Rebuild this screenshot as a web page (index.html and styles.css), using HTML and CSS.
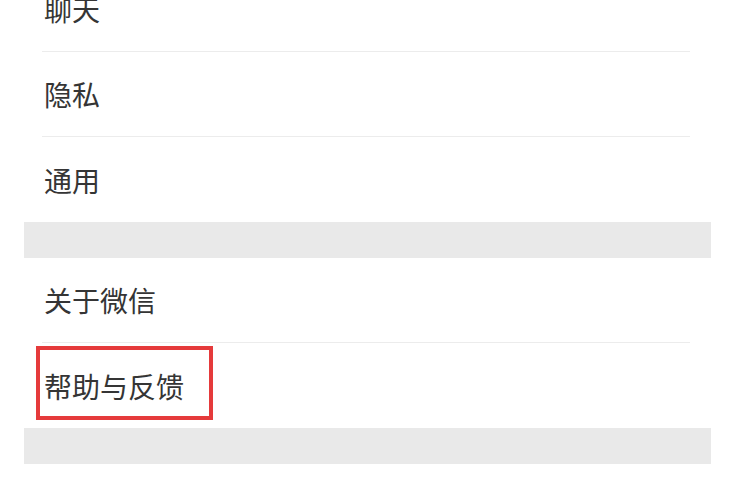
FILE: index.html
```html
<!DOCTYPE html>
<html lang="zh-CN">
<head>
  <meta charset="UTF-8" />
  <meta name="viewport" content="width=device-width, initial-scale=1.0" />
  <title>设置</title>
  <link rel="stylesheet" href="styles.css">
</head>
<body>

  <div class="settings">
    <ul class="group">
      <li class="cell">聊天</li>
      <li class="cell">隐私</li>
      <li class="cell">通用</li>
    </ul>

    <div class="gap"></div>

    <ul class="group">
      <li class="cell">关于微信</li>
      <li class="cell marked">帮助与反馈<span class="mark"></span></li>
    </ul>

    <div class="gap"></div>
  </div>

</body>
</html>
```

FILE: styles.css
```css
* {
  margin: 0;
  padding: 0;
  box-sizing: border-box;
}

body {
  background: #ffffff;
  font-family: "Noto Sans CJK SC", "Noto Sans", sans-serif;
  color: #353535;
  overflow: hidden;
}

/* Settings list */
.settings {
  width: 687px;
  margin: -33px 0 0 24px;
  background: #ffffff;
}

.group {
  list-style: none;
}

.cell {
  position: relative;
  height: 85px;
  display: flex;
  align-items: center;
  margin: 0 21px 0 18px;
  padding-left: 2px;
  font-size: 28px;
  border-bottom: 1px solid #ececec;
}

.cell:last-child {
  border-bottom: none;
}

.gap {
  height: 36px;
  background: #e9e9e9;
}

/* Annotation box */
.mark {
  position: absolute;
  left: -6px;
  top: 3px;
  width: 177px;
  height: 74px;
  border: 4px solid #e53a3b;
}
```
